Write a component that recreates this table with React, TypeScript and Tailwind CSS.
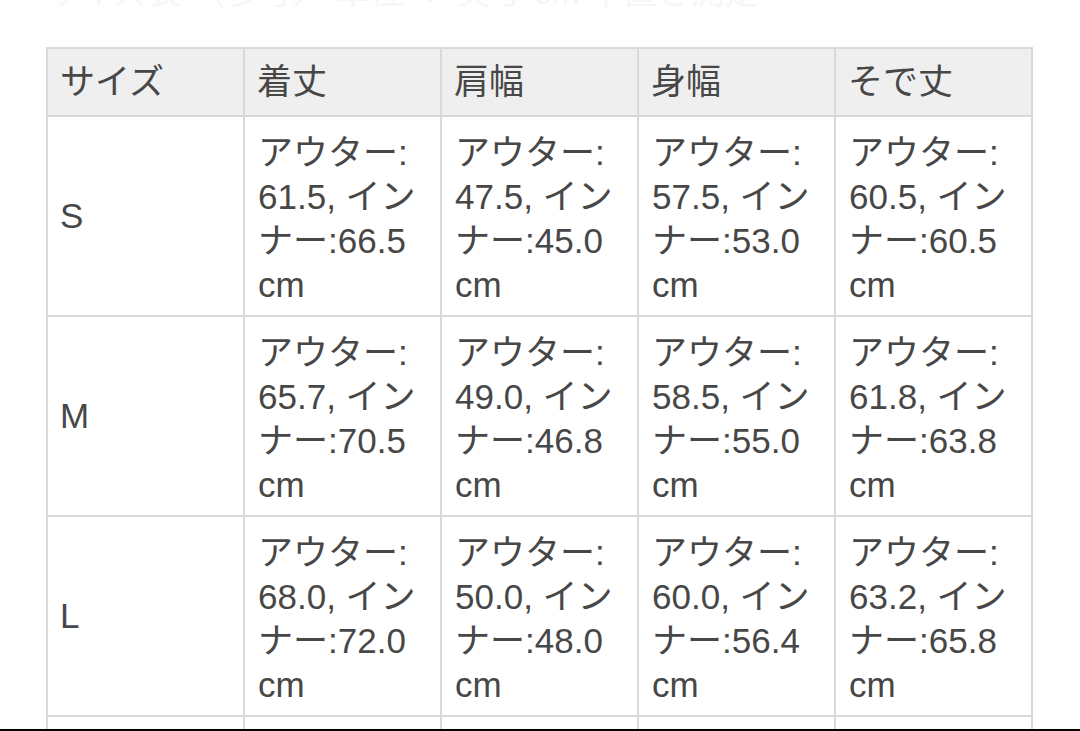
import React from "react";

const headers = ["サイズ", "着丈", "肩幅", "身幅", "そで丈"];

const rows: { size: string; cells: [string, string][] }[] = [
  {
    size: "S",
    cells: [
      ["61.5", "66.5"],
      ["47.5", "45.0"],
      ["57.5", "53.0"],
      ["60.5", "60.5"],
    ],
  },
  {
    size: "M",
    cells: [
      ["65.7", "70.5"],
      ["49.0", "46.8"],
      ["58.5", "55.0"],
      ["61.8", "63.8"],
    ],
  },
  {
    size: "L",
    cells: [
      ["68.0", "72.0"],
      ["50.0", "48.0"],
      ["60.0", "56.4"],
      ["63.2", "65.8"],
    ],
  },
];

export default function App() {
  return (
    <div
      className="w-[1080px] h-[731px] overflow-hidden bg-white flex flex-col text-[#474747]"
      style={{ fontFamily: '"Liberation Sans", "Noto Sans CJK JP", sans-serif' }}
    >
      <div className="flex-1 overflow-hidden">
        <div className="h-[47px] overflow-hidden">
          <div className="-mt-[30px] pl-[46px] text-[34px] leading-[44px] text-[#f6f6f6] whitespace-nowrap">
            サイズ表 （参考） 単位 ： 実寸 cm 平置き測定
          </div>
        </div>
        <div className="ml-[46px] w-[987px] grid grid-cols-[195px_195px_195px_195px_195px] gap-[2px] p-[2px] bg-[#d9d9d9] text-[35px] leading-[44px]">
          {headers.map((h) => (
            <div key={h} className="h-[66px] bg-[#efefef] flex items-center px-[12px]">
              {h}
            </div>
          ))}
          {rows.map((r) => (
            <React.Fragment key={r.size}>
              <div className="h-[198px] bg-white flex items-center px-[12px]">{r.size}</div>
              {r.cells.map(([a, b], i) => (
                <div key={i} className="h-[198px] bg-white pt-[14px] px-[13px] whitespace-nowrap">
                  <div>アウター:</div>
                  <div>{a}, イン</div>
                  <div>ナー:{b}</div>
                  <div>cm</div>
                </div>
              ))}
            </React.Fragment>
          ))}
          {[0, 1, 2, 3, 4].map((i) => (
            <div key={"x" + i} className="h-[198px] bg-white" />
          ))}
        </div>
      </div>
      <div className="h-[2px] bg-black shrink-0" />
    </div>
  );
}
